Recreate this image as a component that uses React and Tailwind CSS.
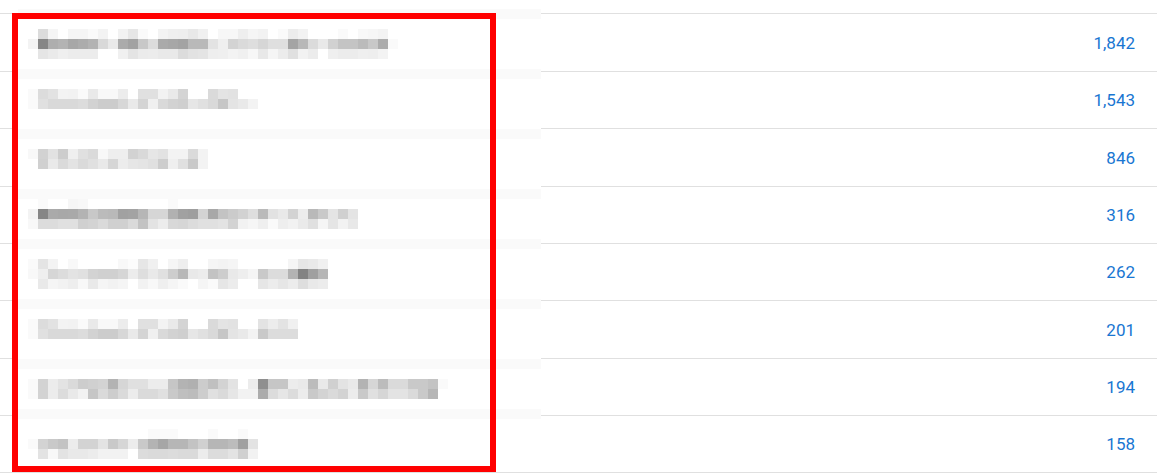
import React from "react";

const rows = [
  { n: "1,842", h: "h-[58px]" },
  { n: "1,543", h: "h-[57px]" },
  { n: "846", h: "h-[58px]" },
  { n: "316", h: "h-[57px]" },
  { n: "262", h: "h-[57px]" },
  { n: "201", h: "h-[58px]" },
  { n: "194", h: "h-[57px]" },
  { n: "158", h: "h-[58px]", last: true },
];

// [y, startCol, values]
const mosaic = [
  [29, 2, "dc f5 ff f5 f5 fa f3 ff f2 e6 fa ff f3 ef ee e8 f0 ff f7 f7 ee f5 f2 ff fa ec f2 ff ff ff fa ff f8 f6 f3"],
  [39, 1, "f3 86 ae b3 a7 ac b3 d9 e9 ab a2 c8 dc aa a7 a3 b9 b9 e3 ef d3 da de d6 df df a4 b8 db e9 d1 c4 c4 bb c8 ac fa"],
  [49, 2, "e5 ea ef ec ec ec ff ff f0 e4 eb ec e9 e9 dc e2 e4 ee ef f3 f0 f7 e8 f5 ec e0 f2 ec ff ef ec ec ef ee f3"],
  [89, 1, "fa dc e2 f3 f2 fa e9 f8 f8 ec ff e0 e0 f2 e9 d4 ff ff da e4 e2"],
  [99, 1, "fa e0 d9 d9 d9 dc d2 cc cc d7 e9 d4 f0 d9 d2 cf e6 e0 d9 c6 e4 e9 f3"],
  [149, 1, "f8 d2 e2 cd ef e0 da f8 ee ee d2 d9 e6 e2 f3 f3 da f3"],
  [159, 2, "d0 e9 da e3 da e0 e9 d6 ec e6 e4 e0 cd ef e0 c9 f3"],
  [199, 2, "fa ff ff f6 f8 ff ff ff ff ff ff ff ff fa"],
  [209, 1, "f3 86 aa a8 a9 b3 c8 bb b9 a1 a3 b6 d6 d6 b1 a1 9e d3 a8 c3 cb d2 de ba e2 e9 d3 ec b9 c9 e4 d0 e4"],
  [219, 1, "f8 dc dc e0 e0 d0 d3 da d0 d0 da c3 e3 ec d8 d6 dc e0 e0 e3 d3 f2 f6 ef fa ee f2 ea e0 f5 e5 f2 e8"],
  [259, 1, "fa e4 f3 ff f8 ff ff ff ff f8 fc e6 f0 ff f5 ee ff ff f5 f3 f5 ff ff ff ff ff f5 e6 e9 f0"],
  [269, 1, "f8 ef d6 dc e3 e0 d3 d0 d0 d6 ec de e9 e0 cd b8 e9 ec c3 cd e9 ee f5 c9 dc dc b3 83 a0 b6"],
  [279, 2, "e9 f5 f2 ee f8 e9 f5 f2 f5 ff f2 f8 ef f5 fa ff f5 fa e6 ec ff ff e6 ec e6 ec de e9 ec"],
  [319, 1, "fa dc e2 f3 f2 fa e9 f8 f8 ec ff e0 e0 f3 e9 d4 ff ff da e4 e2 ff ff e3 ec e3 f0"],
  [329, 1, "fa e0 d9 d9 d9 dc d2 cc cc d7 e9 d4 f0 d9 d2 cf e6 e0 d9 c6 e4 e9 f3 c9 dc dc dc"],
  [379, 1, "fa d3 ec e3 da cd d0 d3 b3 d6 e0 e0 ec ec c6 b3 b0 cc c0 d3 e3 ff ec 8f c6 c6 ec e9 bc e9 d0 e3 e9 b3 d6 bc da da c9 c9 c3 fa"],
  [389, 1, "fa d3 ec dc e9 f2 c6 da cd da ec da da e0 c9 bf bc cd e0 da e6 f2 f2 ac dc e6 dc ec c9 d3 da d3 ec c9 e0 d6 e3 e3 da c9 b6"],
  [429, 13, "fa fa fa ff ff ff fa ff ff fa"],
  [439, 1, "fa d3 c9 c3 ec d3 d3 e3 c9 d6 ec c9 b3 a6 b6 b6 c3 d0 b6 b6 bc a0 e3"],
  [449, 2, "e3 f8 e3 e9 e9 ec f2 f2 f2 ff dc da da dc da da ec dc dc e3 d0 f2"],
];

const bands = [9, 69, 129, 189, 239, 299, 359, 409];

function Mosaic() {
  const rects = [];
  bands.forEach((y) => {
    rects.push(
      <rect key={"b" + y} x={0} y={y - 9} width={523} height={10} fill="#fafafa" />
    );
  });
  mosaic.forEach(([y, start, vals]) => {
    vals.split(" ").forEach((v, i) => {
      if (v === "ff") return;
      const c = start + i;
      rects.push(
        <rect
          key={y + "-" + c}
          x={c * 10}
          y={y - 9}
          width={10}
          height={10}
          fill={"#" + v + v + v}
        />
      );
    });
  });
  return (
    <svg
      width="523"
      height="460"
      viewBox="0 0 523 460"
      shapeRendering="crispEdges"
      className="block"
    >
      <rect x={0} y={0} width={523} height={460} fill="#ffffff" />
      {rects}
    </svg>
  );
}

export default function App() {
  return (
    <div className="relative w-[1157px] h-[474px] overflow-hidden bg-white font-['Roboto',sans-serif]">
      <div className="flex flex-col pt-[13px]">
        {rows.map((r, i) => (
          <div
            key={i}
            className={
              r.last
                ? "flex items-center justify-end border-t border-b border-[#e0e0e0] pr-[22px] h-[58px]"
                : "flex items-center justify-end border-t border-[#e0e0e0] pr-[22px] " + r.h
            }
          >
            <span className="text-[17px] leading-none pt-px text-[#1976d2]">{r.n}</span>
          </div>
        ))}
      </div>
      <div className="absolute left-[18px] top-[9px]">
        <Mosaic />
      </div>
      <div className="absolute left-[12px] top-[13px] w-[484px] h-[459px] border-[6px] border-[#ff0000]" />
    </div>
  );
}
